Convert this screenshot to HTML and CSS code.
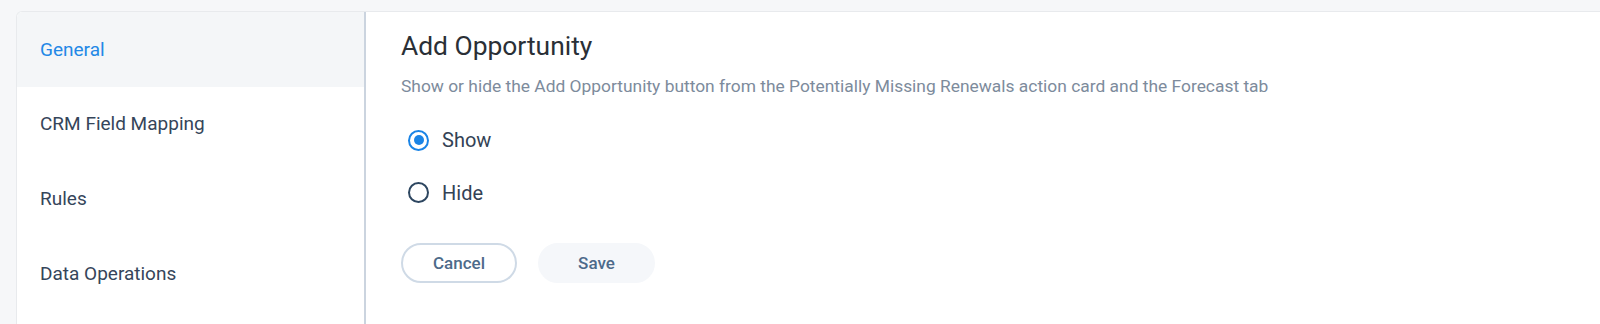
FILE: index.html
```html
<!DOCTYPE html>
<html>
<head>
<meta charset="utf-8">
<link rel="stylesheet" href="styles.css">
</head>
<body>
<div class="page">
  <div class="card">
    <nav class="sidebar">
      <div class="nav-item active">General</div>
      <div class="nav-item">CRM Field Mapping</div>
      <div class="nav-item">Rules</div>
      <div class="nav-item">Data Operations</div>
    </nav>
    <main class="content">
      <h1 class="title">Add Opportunity</h1>
      <p class="desc">Show or hide the Add Opportunity button from the Potentially Missing Renewals action card and the Forecast tab</p>
      <div class="options">
        <label class="option"><span class="radio checked"></span><span class="label">Show</span></label>
        <label class="option"><span class="radio"></span><span class="label">Hide</span></label>
      </div>
      <div class="actions">
        <button class="btn btn-outline">Cancel</button>
        <button class="btn btn-soft">Save</button>
      </div>
    </main>
  </div>
</div>
</body>
</html>
```

FILE: styles.css
```css
* { box-sizing: border-box; }
html, body { margin: 0; padding: 0; }
body {
  background: #f6f7f9;
  font-family: Roboto, "Liberation Sans", Arial, sans-serif;
  width: 1600px;
  height: 324px;
  overflow: hidden;
}
.page {
  padding: 11px 0 0 16px;
  height: 324px;
}
.card {
  display: flex;
  background: #ffffff;
  border: 1px solid #e8eaed;
  border-right: none;
  border-bottom: none;
  border-top-left-radius: 6px;
  height: 313px;
  width: 1584px;
  overflow: hidden;
}
.sidebar {
  width: 349px;
  flex: none;
  border-right: 2px solid #cbd4df;
}
.nav-item {
  height: 74.6px;
  display: flex;
  align-items: center;
  padding-left: 23px;
  font-size: 19px;
  color: #35455a;
}
.nav-item.active {
  background: #f4f6f8;
  color: #2388e6;
  border-top-left-radius: 5px;
}
.content {
  flex: 1;
  padding: 18px 0 0 35px;
}
.title {
  margin: 0;
  font-size: 26.4px;
  line-height: 32px;
  font-weight: 400;
  color: #2a2f36;
}
.desc {
  margin: 12px 0 0 0;
  font-size: 17.4px;
  line-height: 24px;
  color: #7d8b9c;
}
.options {
  margin-top: 27px;
  display: flex;
  flex-direction: column;
  gap: 22.7px;
}
.option {
  display: flex;
  align-items: center;
  height: 30px;
  padding-left: 7px;
}
.radio {
  width: 21px;
  height: 21px;
  border-radius: 50%;
  border: 2.5px solid #2d4660;
  margin-right: 13px;
  flex: none;
  display: flex;
  align-items: center;
  justify-content: center;
}
.radio.checked {
  border-color: #1a84e6;
}
.radio.checked::after {
  content: "";
  width: 10px;
  height: 10px;
  border-radius: 50%;
  background: #1a84e6;
}
.label {
  font-size: 20px;
  color: #334255;
}
.actions {
  margin-top: 35px;
  display: flex;
  gap: 21px;
}
.btn {
  width: 116px;
  height: 40px;
  border-radius: 20px;
  font-family: Roboto, "Liberation Sans", Arial, sans-serif;
  font-size: 17px;
  font-weight: 500;
  color: #4d6a8a;
  padding: 0;
}
.btn-outline {
  background: #ffffff;
  border: 2px solid #cfdae6;
}
.btn-soft {
  background: #f5f7fa;
  border: 2px solid #f5f7fa;
  width: 117px;
}
```
